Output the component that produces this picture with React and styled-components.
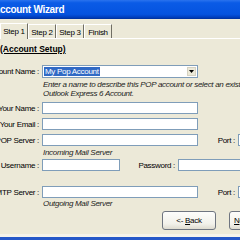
import React from 'react';
import styled, { createGlobalStyle } from 'styled-components';

const GlobalStyle = createGlobalStyle`
  html, body {
    margin: 0;
    padding: 0;
    background: #ece9d8;
    overflow: hidden;
  }
  body {
    font-family: "Liberation Sans", Arial, sans-serif;
    font-size: 8px;
    color: #000;
  }
`;

const Window = styled.div`
  width: 240px;
  height: 240px;
  display: flex;
  flex-direction: column;
  overflow: hidden;
`;

const TitleBar = styled.div`
  height: 19px;
  flex: none;
  display: flex;
  align-items: center;
  background: linear-gradient(180deg, #2a73ee 0%, #0a5be6 15%, #0553df 75%, #0040c0 90%, #00309a 100%);
`;

const TitleText = styled.span`
  margin-left: -7px;
  color: #fff;
  font-weight: bold;
  font-size: 10px;
  letter-spacing: -0.3px;
  white-space: nowrap;
`;

const TabStrip = styled.div`
  height: 19px;
  flex: none;
  display: flex;
  align-items: flex-end;
  border-bottom: 1px solid #fff;
`;

const Tab = styled.div`
  width: 28px;
  height: ${(p) => (p.$active ? '16px' : '14px')};
  margin-bottom: ${(p) => (p.$active ? '-1px' : '0')};
  box-sizing: border-box;
  display: flex;
  align-items: center;
  justify-content: center;
  padding-top: ${(p) => (p.$active ? '0' : '1px')};
  background: #ece9d8;
  border-top: 1px solid #fff;
  border-left: 1px solid #fff;
  border-right: 1px solid #716f64;
  letter-spacing: -0.3px;
  white-space: nowrap;
`;

const Body = styled.div`
  display: flex;
  flex-direction: column;
`;

const Heading = styled.div`
  margin-top: 5px;
  line-height: 10px;
  font-size: 8.5px;
  font-weight: bold;
  text-decoration: underline;
  white-space: nowrap;
`;

const Row = styled.div`
  display: flex;
  align-items: center;
  gap: 3px;
  height: ${(p) => p.$h || 12}px;
  margin-top: ${(p) => p.$top}px;
`;

const Label = styled.div`
  width: ${(p) => p.$w || 39}px;
  margin-left: ${(p) => p.$left || 0}px;
  flex: none;
  display: flex;
  justify-content: flex-end;
  white-space: nowrap;
  letter-spacing: -0.3px;
`;

const Field = styled.div`
  width: ${(p) => p.$w}px;
  height: 100%;
  flex: none;
  box-sizing: border-box;
  background: #fff;
  border: 1px solid #7f9db9;
`;

const Combo = styled(Field)`
  display: flex;
  align-items: center;
  justify-content: space-between;
  padding: 0 0 0 1px;
`;

const Selected = styled.span`
  background: #316ac5;
  color: #fff;
  line-height: 9px;
  padding: 0 1px;
  letter-spacing: -0.3px;
  white-space: nowrap;
`;

const DropButton = styled.div`
  width: 9px;
  height: 9px;
  margin-right: 1px;
  box-sizing: border-box;
  display: flex;
  align-items: center;
  justify-content: center;
  background: #ece9d8;
  border: 1px solid #d6d2c2;
`;

const Note = styled.div`
  margin-top: ${(p) => p.$top}px;
  margin-left: 43px;
  font-style: italic;
  line-height: 9px;
  color: #222;
  letter-spacing: -0.3px;
  white-space: nowrap;
`;

const ButtonRow = styled.div`
  display: flex;
  gap: 13px;
  margin-top: 3px;
  padding-left: 162px;
`;

const Button = styled.div`
  width: ${(p) => p.$w}px;
  height: 19px;
  flex: none;
  box-sizing: border-box;
  display: flex;
  align-items: center;
  justify-content: ${(p) => (p.$start ? 'flex-start' : 'center')};
  padding-left: ${(p) => (p.$start ? '4px' : '0')};
  border: 1px solid #6f7580;
  border-radius: 3px;
  background: linear-gradient(180deg, #fdfdfb 0%, #f2f1ea 70%, #dedbcf 100%);
  letter-spacing: -0.3px;
  white-space: pre;

  u {
    text-decoration: underline;
  }
`;

const Taskbar = styled.div`
  margin-top: auto;
  display: flex;
  flex-direction: column;
`;

const TaskbarEdge = styled.div`
  height: 3px;
  background: #f4f2ea;
`;

const TaskbarBlue = styled.div`
  height: 3px;
  background: #2457c8;
`;

function Arrow() {
  return (
    <svg width="5" height="3" viewBox="0 0 5 3">
      <path d="M0 0h5L2.5 3z" fill="#000" />
    </svg>
  );
}

export default function App() {
  return (
    <Window>
      <GlobalStyle />
      <TitleBar>
        <TitleText>Account Wizard</TitleText>
      </TitleBar>

      <TabStrip>
        <Tab $active>Step 1</Tab>
        <Tab>Step 2</Tab>
        <Tab>Step 3</Tab>
        <Tab>Finish</Tab>
      </TabStrip>

      <Body>
        <Heading>(Account Setup)</Heading>

        <Row $top={11} $h={13}>
          <Label>Account Name :</Label>
          <Combo $w={156}>
            <Selected>My Pop Account</Selected>
            <DropButton>
              <Arrow />
            </DropButton>
          </Combo>
        </Row>
        <Note $top={2}>
          Enter a name to describe this POP account or select an existing
          <br />
          Outlook Express 6 Account.
        </Note>

        <Row $top={4}>
          <Label>Your Name :</Label>
          <Field $w={156} />
        </Row>
        <Row $top={4}>
          <Label>Your Email :</Label>
          <Field $w={156} />
        </Row>
        <Row $top={4}>
          <Label>POP Server :</Label>
          <Field $w={156} />
          <Label $w={17} $left={17}>Port :</Label>
          <Field $w={30} />
        </Row>
        <Note $top={2}>Incoming Mail Server</Note>

        <Row $top={2}>
          <Label>Username :</Label>
          <Field $w={78} />
          <Label $w={35} $left={17}>Password :</Label>
          <Field $w={80} />
        </Row>

        <Row $top={15}>
          <Label>SMTP Server :</Label>
          <Field $w={156} />
          <Label $w={17} $left={17}>Port :</Label>
          <Field $w={30} />
        </Row>
        <Note $top={1}>Outgoing Mail Server</Note>

        <ButtonRow>
          <Button $w={54}>
            {'<- '}<u>B</u>ack
          </Button>
          <Button $w={54} $start>
            <u>N</u>{'ext ->'}
          </Button>
        </ButtonRow>
      </Body>

      <Taskbar>
        <TaskbarEdge />
        <TaskbarBlue />
      </Taskbar>
    </Window>
  );
}
